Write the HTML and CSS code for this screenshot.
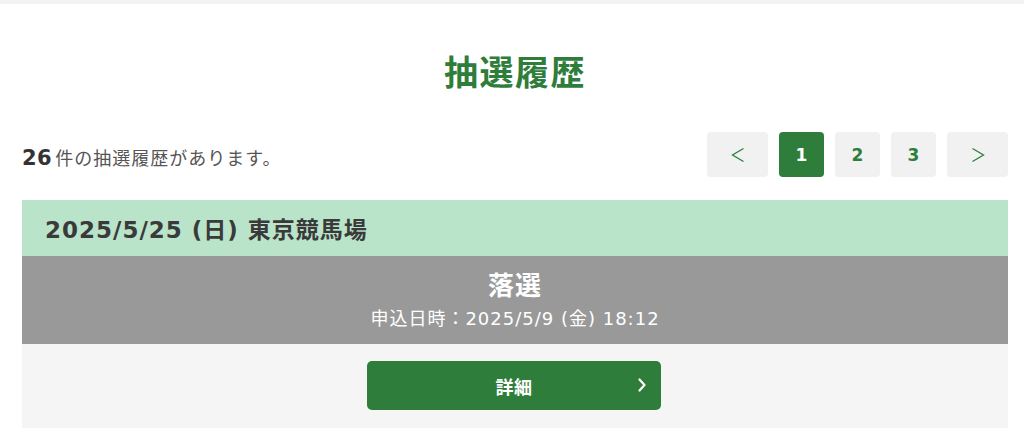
FILE: index.html
```html
<!DOCTYPE html>
<html lang="ja">
<head>
<meta charset="utf-8">
<link rel="stylesheet" href="styles.css">
</head>
<body>
<div class="topbar"></div>
<main class="page">
  <h1 class="title">抽選履歴</h1>
  <div class="toolbar">
    <p class="count"><span class="num">26</span>件の抽選履歴があります。</p>
    <nav class="pager">
      <a class="pg arrow" aria-label="前へ"><svg width="14" height="16" viewBox="0 0 14 16"><path d="M12.5 1.5 L1.5 8 L12.5 14.5" fill="none" stroke="#2e7d3a" stroke-width="1.3"/></svg></a>
      <a class="pg num-btn active">1</a>
      <a class="pg num-btn">2</a>
      <a class="pg num-btn">3</a>
      <a class="pg arrow" aria-label="次へ"><svg width="14" height="16" viewBox="0 0 14 16"><path d="M1.5 1.5 L12.5 8 L1.5 14.5" fill="none" stroke="#2e7d3a" stroke-width="1.3"/></svg></a>
    </nav>
  </div>
  <section class="card">
    <div class="card-head">2025/5/25 (日) 東京競馬場</div>
    <div class="card-status">
      <div class="status">落選</div>
      <div class="date">申込日時：2025/5/9 (金) 18:12</div>
    </div>
    <div class="card-foot">
      <a class="detail-btn">詳細
        <svg class="chev" width="10" height="14" viewBox="0 0 10 14"><path d="M2.5 1.5 L7.5 7 L2.5 12.5" fill="none" stroke="#fff" stroke-width="2.2" stroke-linecap="round" stroke-linejoin="round"/></svg>
      </a>
    </div>
  </section>
</main>
</body>
</html>
```

FILE: styles.css
```css
* { box-sizing: border-box; }
html, body { margin: 0; padding: 0; background: #fff; }
body {
  font-family: "DejaVu Sans", "Noto Sans CJK JP", sans-serif;
  color: #333;
}
.topbar { height: 4px; background: #f2f2f2; }
.page { padding: 0 16px 0 22px; }
.title {
  margin: 0;
  padding-top: 45px;
  text-align: center;
  font-family: "Noto Sans CJK JP", sans-serif;
  font-size: 34px;
  font-weight: 700;
  letter-spacing: 1.5px;
  color: #2e7d3a;
  line-height: 44px;
}
.toolbar {
  display: flex;
  justify-content: space-between;
  align-items: center;
  margin-top: 39px;
  margin-bottom: 23px;
}
.count {
  margin: 0;
  padding-top: 6px;
  font-family: "Noto Sans CJK JP", sans-serif;
  font-size: 18px;
  letter-spacing: 1px;
  line-height: 28px;
  color: #555;
}
.count .num {
  font-family: "DejaVu Sans", sans-serif;
  font-size: 21px;
  font-weight: 700;
  letter-spacing: 0.5px;
  color: #333;
  margin-right: 3px;
}
.pager { display: flex; gap: 11px; }
.pg {
  display: flex;
  align-items: center;
  justify-content: center;
  height: 45px;
  border-radius: 4px;
  background: #f1f1f1;
  color: #2e7d3a;
  font-size: 17px;
  font-weight: 700;
}
.pg.arrow { width: 61px; }
.pg.num-btn { width: 45px; }
.pg.active { background: #2e7d3a; color: #fff; }
.card { width: 986px; }
.card-head {
  height: 56px;
  background: #b9e4c9;
  padding-left: 23px;
  display: flex;
  align-items: center;
  font-size: 23px;
  font-weight: 700;
  letter-spacing: 1px;
  color: #3a3a3a;
}
.card-status {
  height: 88px;
  background: #999;
  color: #fff;
  text-align: center;
  padding-top: 11px;
}
.status {
  font-family: "Noto Sans CJK JP", sans-serif;
  font-size: 26px;
  font-weight: 700;
  letter-spacing: 1px;
  line-height: 34px;
}
.date {
  font-size: 18px;
  letter-spacing: 1px;
  line-height: 24px;
  margin-top: 6px;
}
.card-foot {
  height: 84px;
  background: #f5f5f5;
  padding-top: 17px;
  display: flex;
  justify-content: center;
}
.detail-btn {
  position: relative;
  width: 294px;
  height: 49px;
  margin-left: -2px;
  background: #2e7d3a;
  border-radius: 5px;
  color: #fff;
  display: flex;
  align-items: center;
  justify-content: center;
  font-family: "Noto Sans CJK JP", sans-serif;
  font-size: 18px;
  font-weight: 700;
  letter-spacing: 0.5px;
}
.chev { position: absolute; right: 14px; top: 17px; }
```
